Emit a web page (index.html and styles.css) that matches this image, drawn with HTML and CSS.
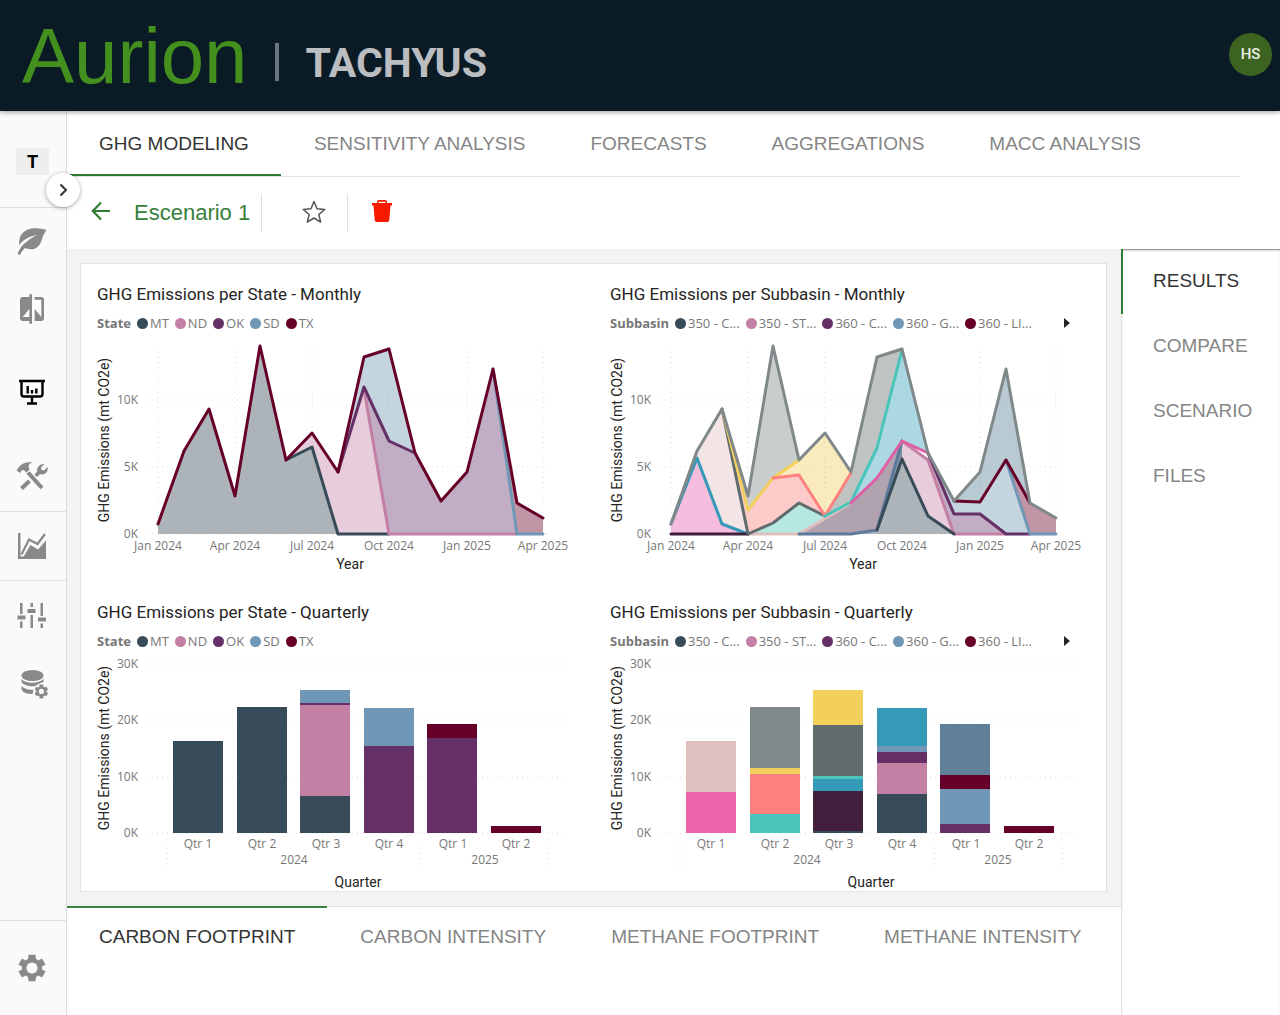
FILE: index.html
```html
<!DOCTYPE html>
<html lang="en">
<head>
<meta charset="utf-8">
<title>Aurion | Tachyus - GHG Modeling</title>
<link rel="stylesheet" href="styles.css">
</head>
<body>
<header class="topbar">
  <a class="brand" href="#">Aurion</a>
  <span class="brand-divider"></span>
  <span class="company">TACHYUS</span>
  <button class="avatar" type="button">HS</button>
</header>

<div class="shell">
  <aside class="sidebar">
    <div class="workspace">
      <button class="workspace-badge" type="button">T</button>
      <button class="expand" type="button" aria-label="Expand menu">
        <svg width="24" height="24" viewBox="0 0 24 24"><path d="M9.500 6.500 15 12l-5.500 5.500" fill="none" stroke="#333" stroke-width="2"/></svg>
      </button>
    </div>
    <nav class="side-group">
      <a class="side-link h67" href="#" aria-label="Emissions">
        <svg width="32" height="30" viewBox="0 0 32 30"><path d="M30.500 3C22 0 10 0 5 8c-2 4-2 7-2 10C8 12 14 9 21 8 13 12 4.500 18 1.500 27l2.500 1c1-3 3-5 5-7 7 3 13 1 16-6 1.500-5 3-9 5.500-12z"/></svg>
      </a>
      <a class="side-link h68" href="#" aria-label="Compare">
        <svg width="32" height="32" viewBox="0 0 24 24"><path d="M10 3H5c-1.100 0-2 .9-2 2v14c0 1.100.9 2 2 2h5v2h2V1h-2v2zm0 15H5l5-6v6zm9-15h-5v2h5v13l-5-6v9h5c1.100 0 2-.9 2-2V5c0-1.100-.9-2-2-2z"/></svg>
      </a>
      <a class="side-link h98 current" href="#" aria-label="Modeling">
        <svg width="28" height="26" viewBox="0 0 28 26"><path d="M1 2h26M3.500 2v13c0 1.500 1 2.500 2.500 2.500h16c1.500 0 2.500-1 2.500-2.500V2M14 18v6M9 24.500h10" fill="none" stroke="#000" stroke-width="2.400"/><path d="M9.700 7v7.500M14 11v3.500M18.300 9.500v5" fill="none" stroke="#000" stroke-width="2.400"/></svg>
      </a>
      <a class="side-link h70" href="#" aria-label="Tools">
        <svg width="32" height="30" viewBox="0 0 32 30"><path d="M.5 9.500 3 6C6 2 11 .5 17 1.500c-3 .5-4.500 2-4.500 4l1 3-3 3-3-2.500-2 .5L4.500 12z"/><path d="M12 11.500 26 27" stroke="#898989" stroke-width="4" fill="none"/><path d="M5.500 27.500l8-7.500" stroke="#898989" stroke-width="4" fill="none"/><path d="M28.500 3l-3.500 3.500.5 2.500 2.500.5 3.500-3.500c1 3.500-1 7-4.500 7.500l-3-.3-3 2.800-2.500-2.500 2.700-3C20.500 6.500 24 2.500 28.500 3z"/></svg>
      </a>
    </nav>
    <nav class="side-group">
      <a class="side-link h68" href="#" aria-label="Charts">
        <svg width="28" height="26" viewBox="0 0 28 26"><path d="M0 0h2.500v23.500H28V26H0z"/><path d="M3.500 21.500 11 6.500l8.500 4.500L27 1" fill="none" stroke="#898989" stroke-width="2.200"/><path d="M6 23 12.500 12l7.500 4.500 8-9V25H5z"/></svg>
      </a>
    </nav>
    <nav class="side-group">
      <a class="side-link h68" href="#" aria-label="Parameters">
        <svg width="30" height="26" viewBox="0 0 30 26"><path d="M4 1h2.500v11H4zM1.500 13.500h8v4h-8zM4 19.500h2.500V26H4zM14.500 1H17v4h-2.500zM11.500 7h8v4h-8zM14.500 13H17v13h-2.500zM24.500 1H27v13h-2.500zM22 15.500h8v4h-8zM24.500 21.500H27V26h-2.500z"/></svg>
      </a>
      <a class="side-link h70" href="#" aria-label="Data settings">
        <svg class="shift" width="30" height="30" viewBox="0 0 30 30"><ellipse cx="12.500" cy="6.500" rx="11" ry="5.500"/><path d="M1.500 10c4 5 17 5 22 0v3c-3 1-6 2-8 4-6 1-12-1-14-4zM1.500 17c3 3 8 4 12 4l-1 4c-5 0-10-1-11-5z"/><path transform="translate(13 14) scale(.7)" d="M19.500 12c0-.3 0-.7-.1-1l2.100-1.700-2.200-4-2.600 1c-.5-.4-1.100-.8-1.700-1L14.600 2H9.400L9 5.300c-.6.2-1.200.6-1.700 1l-2.600-1-2.200 4L4.600 11c-.1.300-.1.700-.1 1s0 .7.100 1l-2.100 1.700 2.200 4 2.600-1c.5.400 1.100.8 1.700 1l.4 3.300h5.200l.4-3.300c.6-.2 1.200-.6 1.700-1l2.600 1 2.200-4-2.100-1.700c.1-.3.100-.7.100-1zM12 15.700a3.700 3.700 0 1 1 0-7.400 3.700 3.700 0 0 1 0 7.400z"/></svg>
      </a>
    </nav>
    <nav class="side-group side-bottom">
      <a class="side-link h94" href="#" aria-label="Settings">
        <svg width="32" height="32" viewBox="0 0 24 24"><path d="M19.500 12c0-.3 0-.7-.1-1l2.700-1.700-2.600-4.500-2.900 1.500c-.5-.4-1.100-.8-1.700-1L14.600 2H9.400L9 5.300c-.6.2-1.200.6-1.700 1L4.500 4.800 1.900 9.300 4.600 11c-.1.300-.1.700-.1 1s0 .7.100 1l-2.700 1.700 2.600 4.500 2.800-1.500c.5.400 1.100.8 1.700 1l.4 3.300h5.200l.4-3.300c.6-.2 1.200-.6 1.700-1l2.800 1.500 2.600-4.500-2.700-1.700c.1-.3.100-.7.100-1zM12 16.200a4.200 4.200 0 1 1 0-8.400 4.200 4.200 0 0 1 0 8.400z"/></svg>
      </a>
    </nav>
  </aside>

  <div class="page">
    <nav class="tabs top-tabs">
      <a class="tab active" href="#">GHG MODELING</a>
      <a class="tab" href="#">SENSITIVITY ANALYSIS</a>
      <a class="tab" href="#">FORECASTS</a>
      <a class="tab" href="#">AGGREGATIONS</a>
      <a class="tab" href="#">MACC ANALYSIS</a>
    </nav>

    <div class="toolbar">
      <a class="back" href="#" aria-label="Back">
        <svg width="20" height="20" viewBox="0 0 20 20"><path d="M19 10H2M10 1.500 1.800 10l8.200 8.500" fill="none" stroke="#2e7d32" stroke-width="2.200"/></svg>
      </a>
      <h1 class="scenario">Escenario 1</h1>
      <div class="tool">
        <button class="icon-btn" type="button" aria-label="Favorite">
          <svg width="24" height="24" viewBox="0 0 24 24"><path d="M12 1.500l3 7.300 7.800.6-6 5.100 1.900 7.600-6.700-4.100-6.700 4.100 1.900-7.600-6-5.100 7.800-.6z" fill="none" stroke="#555" stroke-width="1.500" stroke-linejoin="round"/></svg>
        </button>
      </div>
      <button class="icon-btn trash" type="button" aria-label="Delete">
        <svg width="20" height="22" viewBox="0 0 20 22"><path d="M0 3h5V1.800C5 .8 5.800 0 6.800 0h6.400c1 0 1.800.8 1.800 1.800V3h5v2.500h-1.500L17.300 20c-.1 1-.9 2-2 2H4.700c-1.100 0-1.900-1-2-2L1.500 5.500H0zm6.500 0h7V1.700h-7z" fill="#f51a00"/></svg>
      </button>
    </div>

    <div class="work">
      <div class="center">
        <main class="board">
          <section class="chart">
            <h2 class="chart-title">GHG Emissions per State - Monthly</h2>
            <div class="legend"><b>State</b><span class="key mt">MT</span><span class="key nd">ND</span><span class="key ok">OK</span><span class="key sd">SD</span><span class="key tx">TX</span></div>
            <svg class="plot" viewBox="0 0 512 249">
              <path class="a-mt" d="M77 201V191L103 118 128 76 154 163 179 13 205 127 231 114 257 201z"/>
              <path class="a-nd" d="M205 127 231 100 257 139 283 56 308 201H257L231 114z"/>
              <path class="a-ok" d="M283 54 308 108 334 120 360 168 386 139 412 36 436 201H308z"/>
              <path class="a-sd" d="M257 139 283 24 308 16 334 120 308 108 283 54z"/>
              <path class="a-tx" d="M412 36 436 170 462 185V201H436z"/>
              <path class="grid" d="M66 201H470M66 134H470M66 67H470M77 14V201M154 14V201M231 14V201M308 14V201M386 14V201M462 14V201"/>
              <g class="line">
                <path class="s-mt" d="M205 127 231 114 257 201H308"/>
                <path class="s-nd" d="M283 56 308 201H436"/>
                <path class="s-ok" d="M257 139 283 54 308 108 334 120"/>
                <path class="s-sd" d="M412 36 436 201H462"/>
                <path class="s-tx" d="M77 191 103 118 128 76 154 163 179 13 205 127 231 100 257 139 283 24 308 16 334 120 360 168 386 139 412 36 436 170 462 185"/>
              </g>
              <g class="axis end"><text x="57" y="205">0K</text><text x="57" y="138">5K</text><text x="57" y="71">10K</text></g>
              <g class="axis mid"><text x="77" y="217">Jan 2024</text><text x="154" y="217">Apr 2024</text><text x="231" y="217">Jul 2024</text><text x="308" y="217">Oct 2024</text><text x="386" y="217">Jan 2025</text><text x="462" y="217">Apr 2025</text></g>
              <text class="axis-title" x="269" y="236">Year</text>
              <text class="axis-title" transform="translate(28 107) rotate(-90)">GHG Emissions (mt CO2e)</text>
            </svg>
          </section>

          <section class="chart">
            <h2 class="chart-title">GHG Emissions per Subbasin - Monthly</h2>
            <div class="legend"><b>Subbasin</b><span class="key mt">350 - C...</span><span class="key nd">350 - ST...</span><span class="key ok">360 - C...</span><span class="key sd">360 - G...</span><span class="key tx">360 - LI...</span><button class="next" type="button" aria-label="Next"></button></div>
            <svg class="plot" viewBox="0 0 512 249">
              <path fill="#f6bcdd" d="M77 201V191L103 125 128 191 154 201z"/>
              <path fill="#f3e4e5" d="M77 191 103 118 128 76 154 201 128 191 103 125z"/>
              <path fill="#c9cecd" d="M128 76 154 163 179 13 205 127 179 145 154 177z"/>
              <path fill="#fdcaca" d="M128 76 154 177 179 145 205 142 231 183 205 170 179 190 154 201z"/>
              <path fill="#faebbf" d="M179 145 205 127 231 100 257 139 231 183 205 142z"/>
              <path fill="#b5e8e1" d="M154 201 179 190 205 170 231 183 257 169 205 201z"/>
              <path fill="#bfc4c2" d="M231 183 257 139 283 24 308 16 283 115 257 169z"/>
              <path fill="#abd8e3" d="M257 169 283 115 308 16 334 120 308 108 283 145z"/>
              <path fill="#b1a2af" d="M205 201 257 170 283 145 308 108 283 197 257 201z"/>
              <path fill="#8593a8" d="M283 197 308 108V126z"/>
              <path class="a-mt" d="M257 201 283 197 308 126 334 183 360 201z"/>
              <path class="a-nd" d="M308 108 334 127 360 201 334 183 308 126z"/>
              <path class="a-ok" d="M334 120 360 181H386L412 201H360L334 127z"/>
              <path class="a-sd" d="M334 120 360 168 386 169 412 127 436 201H412L386 181H360z"/>
              <path fill="#bacad3" d="M360 168 386 139 412 36 436 170 412 127 386 169z"/>
              <path class="a-tx" d="M412 127 436 170 462 185V201H436z"/>
              <path class="grid" d="M66 201H470M66 134H470M66 67H470M77 14V201M154 14V201M231 14V201M308 14V201M386 14V201M462 14V201"/>
              <g class="line">
                <path stroke="#dfbfbf" d="M154 201H205L257 170"/>
                <path stroke="#3599b8" d="M77 191 103 125 128 191 154 201"/>
                <path stroke="#411f3d" d="M77 201H154"/>
                <path stroke="#5f6b6d" d="M128 76 154 201 179 190 205 170 231 183"/>
                <path stroke="#f2d05b" d="M128 76 154 177 179 145 205 127"/>
                <path stroke="#fd817e" d="M179 145 205 142 231 183 257 140"/>
                <path stroke="#4ac5bb" d="M231 183 257 169 283 115 308 17"/>
                <path class="s-nd" d="M308 108 334 127 360 201H412"/>
                <path stroke="#5c7a9b" d="M205 201H257L283 197 308 108"/>
                <path stroke="#e05fa4" d="M257 170 283 145 308 108 334 120"/>
                <path class="s-mt" d="M283 197 308 126 334 183 360 201"/>
                <path class="s-ok" d="M334 120 360 181H386L412 201H436"/>
                <path class="s-sd" d="M412 127 436 201H462"/>
                <path class="s-tx" d="M360 168 386 169 412 127 436 170"/>
                <path stroke="#7f898a" d="M77 191 103 118 128 76 154 163 179 13 205 127 231 100 257 139 283 24 308 16 334 120 360 168 386 139 412 36 436 170 462 185"/>
              </g>
              <g class="axis end"><text x="57" y="205">0K</text><text x="57" y="138">5K</text><text x="57" y="71">10K</text></g>
              <g class="axis mid"><text x="77" y="217">Jan 2024</text><text x="154" y="217">Apr 2024</text><text x="231" y="217">Jul 2024</text><text x="308" y="217">Oct 2024</text><text x="386" y="217">Jan 2025</text><text x="462" y="217">Apr 2025</text></g>
              <text class="axis-title" x="269" y="236">Year</text>
              <text class="axis-title" transform="translate(28 107) rotate(-90)">GHG Emissions (mt CO2e)</text>
            </svg>
          </section>

          <section class="chart">
            <h2 class="chart-title">GHG Emissions per State - Quarterly</h2>
            <div class="legend"><b>State</b><span class="key mt">MT</span><span class="key nd">ND</span><span class="key ok">OK</span><span class="key sd">SD</span><span class="key tx">TX</span></div>
            <svg class="plot" viewBox="0 0 512 240">
              <path class="grid" d="M66 182H484M66 126H484M66 69H484M66 13H484M86 182V219M340 182V219M468 182V219"/>
              <path fill="#374b59" d="M92 90h50v92H92zM156 56h50v126h-50zM219 145h50v37h-50z"/>
              <path fill="#c47fa5" d="M219 54h50v91h-50z"/>
              <path fill="#643066" d="M219 52h50v2h-50zM283 95h50v87h-50zM346 87h50v95h-50z"/>
              <path fill="#7097b5" d="M219 39h50v13h-50zM283 57h50v38h-50z"/>
              <path fill="#660029" d="M346 73h50v14h-50zM410 175h50v7h-50z"/>
              <g class="axis end"><text x="57" y="186">0K</text><text x="57" y="130">10K</text><text x="57" y="73">20K</text><text x="57" y="17">30K</text></g>
              <g class="axis mid"><text x="117" y="197">Qtr 1</text><text x="181" y="197">Qtr 2</text><text x="245" y="197">Qtr 3</text><text x="308" y="197">Qtr 4</text><text x="372" y="197">Qtr 1</text><text x="435" y="197">Qtr 2</text><text x="213" y="213">2024</text><text x="404" y="213">2025</text></g>
              <text class="axis-title" x="277" y="236">Quarter</text>
              <text class="axis-title" transform="translate(28 97) rotate(-90)">GHG Emissions (mt CO2e)</text>
            </svg>
          </section>

          <section class="chart">
            <h2 class="chart-title">GHG Emissions per Subbasin - Quarterly</h2>
            <div class="legend"><b>Subbasin</b><span class="key mt">350 - C...</span><span class="key nd">350 - ST...</span><span class="key ok">360 - C...</span><span class="key sd">360 - G...</span><span class="key tx">360 - LI...</span><button class="next" type="button" aria-label="Next"></button></div>
            <svg class="plot" viewBox="0 0 512 240">
              <path class="grid" d="M66 182H484M66 126H484M66 69H484M66 13H484M86 182V219M340 182V219M468 182V219"/>
              <path fill="#ec64a9" d="M92 141h50v41H92z"/>
              <path fill="#dfbfbf" d="M92 90h50v51H92z"/>
              <path fill="#4ac5bb" d="M156 163h50v19h-50zM219 125h50v3h-50z"/>
              <path fill="#fd817e" d="M156 123h50v40h-50z"/>
              <path fill="#f2d05b" d="M156 117h50v6h-50zM219 39h50v35h-50z"/>
              <path fill="#7f898a" d="M156 56h50v61h-50z"/>
              <path fill="#374b59" d="M219 180h50v2h-50zM283 143h50v39h-50z"/>
              <path fill="#411f3d" d="M219 140h50v40h-50z"/>
              <path fill="#3599b8" d="M219 128h50v12h-50zM283 57h50v38h-50z"/>
              <path fill="#5f6b6d" d="M219 74h50v51h-50z"/>
              <path fill="#c47fa5" d="M283 112h50v31h-50z"/>
              <path fill="#643066" d="M283 101h50v11h-50zM346 173h50v9h-50z"/>
              <path fill="#7097b5" d="M283 95h50v6h-50zM346 138h50v35h-50z"/>
              <path fill="#660029" d="M346 124h50v14h-50zM410 175h50v7h-50z"/>
              <path fill="#5f8098" d="M346 73h50v51h-50z"/>
              <g class="axis end"><text x="57" y="186">0K</text><text x="57" y="130">10K</text><text x="57" y="73">20K</text><text x="57" y="17">30K</text></g>
              <g class="axis mid"><text x="117" y="197">Qtr 1</text><text x="181" y="197">Qtr 2</text><text x="245" y="197">Qtr 3</text><text x="308" y="197">Qtr 4</text><text x="372" y="197">Qtr 1</text><text x="435" y="197">Qtr 2</text><text x="213" y="213">2024</text><text x="404" y="213">2025</text></g>
              <text class="axis-title" x="277" y="236">Quarter</text>
              <text class="axis-title" transform="translate(28 97) rotate(-90)">GHG Emissions (mt CO2e)</text>
            </svg>
          </section>
        </main>

        <nav class="tabs bottom-tabs">
          <a class="tab active" href="#">CARBON FOOTPRINT</a>
          <a class="tab" href="#">CARBON INTENSITY</a>
          <a class="tab" href="#">METHANE FOOTPRINT</a>
          <a class="tab" href="#">METHANE INTENSITY</a>
        </nav>
      </div>

      <nav class="views">
        <a class="view active" href="#">RESULTS</a>
        <a class="view" href="#">COMPARE</a>
        <a class="view" href="#">SCENARIO</a>
        <a class="view" href="#">FILES</a>
      </nav>
    </div>
  </div>
</div>
</body>
</html>
```
FILE: styles.css
```css
* { box-sizing: border-box; }

body {
  margin: 0;
  min-height: 100vh;
  display: flex;
  flex-direction: column;
  background: #fff;
  font-family: "Liberation Sans", Arial, sans-serif;
  color: #333;
}

a { color: inherit; text-decoration: none; }
button { border: 0; padding: 0; background: none; font: inherit; color: inherit; cursor: pointer; }
svg { display: block; }

/* Top bar */
.topbar {
  display: flex;
  align-items: center;
  height: 111px;
  padding: 0 8px 0 22px;
  background: #0b1b26;
  box-shadow: 0 1px 5px rgba(0, 0, 0, .4);
  position: relative;
  z-index: 2;
}
.brand { font-size: 78px; line-height: 88px; color: #43901f; }
.brand-divider { width: 4px; height: 38px; margin: 12px 26px 0 28px; background: #6d767c; }
.company { font: bold 41px/48px Roboto, sans-serif; color: #bcbdc0; padding-top: 14px; }
.avatar {
  width: 43px;
  height: 43px;
  margin: 0 0 3px auto;
  border-radius: 50%;
  background: #3d6321;
  color: #e8eee4;
  font: 500 15px/43px Roboto, sans-serif;
}

.shell { flex: 1; display: flex; }

/* Sidebar */
.sidebar {
  flex: none;
  width: 67px;
  display: flex;
  flex-direction: column;
  background: #fafafa;
  border-right: 1px solid #dcdcdc;
}
.workspace { position: relative; height: 96px; padding: 37px 0 0 16px; }
.workspace-badge { width: 33px; height: 27px; background: #eee; color: #000; font: bold 18px/27px Roboto, sans-serif; }
.expand {
  position: absolute;
  top: 62px;
  left: 46px;
  z-index: 1;
  width: 34px;
  height: 34px;
  border-radius: 50%;
  background: #fff;
  box-shadow: 0 1px 4px rgba(0, 0, 0, .35);
  display: grid;
  place-items: center;
}
.side-group { border-top: 1px solid #e0e0e0; }
.side-bottom { margin-top: auto; }
.side-link { display: flex; align-items: center; padding-left: 16px; fill: #898989; }
.side-link svg { margin: 0 auto 0 0; }
.side-link svg[width="28"] { margin-left: 2px; }
.side-link .shift { margin-left: 4px; }
.current { fill: #000; }
.h67 { height: 67px; }
.h68 { height: 68px; }
.h70 { height: 70px; }
.h94 { height: 94px; }
.h98 { height: 98px; }

/* Tabs */
.page { flex: 1; min-width: 0; display: flex; flex-direction: column; }
.tabs { display: flex; gap: 1px; font-size: 19px; color: #858585; }
.tab { padding: 0 32px; line-height: 65px; white-space: nowrap; }
.tab.active, .view.active { color: #333; }
.top-tabs { height: 66px; margin-right: 40px; border-bottom: 1px solid #e2e2e2; }
.top-tabs .active { height: 65px; border-bottom: 2px solid #2e7d32; }
.bottom-tabs { flex: 1; min-height: 109px; background: #fff; border-top: 1px solid #e2e2e2; }
.bottom-tabs .tab { margin-top: -1px; line-height: 58px; border-top: 2px solid transparent; }
.bottom-tabs .active { border-color: #3c8540; }

/* Toolbar */
.toolbar { display: flex; align-items: center; height: 72px; padding-left: 24px; }
.back { margin-bottom: 4px; }
.scenario { margin: 0; padding: 0 11px 0 23px; font-size: 22px; font-weight: 400; line-height: 26px; color: #37803b; }
.tool { height: 38px; padding: 0 21px 0 40px; border: solid #e0e0e0; border-width: 0 1px; display: flex; align-items: center; }
.tool .icon-btn { margin-bottom: 2px; }
.trash { margin: 0 0 4px 24px; }

/* Work area */
.work { flex: 1; display: flex; }
.center { flex: 1; min-width: 0; display: flex; flex-direction: column; background: #f3f3f3; }
.board {
  margin: 14px 14px 14px 13px;
  border: 1px solid #e2e2e2;
  background: #fff;
  display: grid;
  grid-template-columns: 1fr 1fr;
  column-gap: 1px;
}

.views {
  flex: none;
  width: 159px;
  border-left: 1px solid #e0e0e0;
  box-shadow: inset 0 2px 2px -1px #777;
  font-size: 19px;
  color: #858585;
}
.view { display: block; height: 65px; margin-left: -1px; padding-left: 30px; border-left: 2px solid transparent; line-height: 63px; }
.view.active { border-color: #2e7d32; }

/* Charts */
.chart { padding-top: 18px; min-width: 0; }
.chart-title { margin: 0 0 7px 16px; font: 400 17px/24px Roboto, sans-serif; color: #252423; }
.legend { display: flex; align-items: center; gap: 6px; padding: 0 36px 0 16px; font: 13px/20px "Open Sans", sans-serif; color: #777; }
.key { display: flex; align-items: center; gap: 2px; white-space: nowrap; }
.key::before { content: ""; width: 11px; height: 11px; border-radius: 50%; background: currentColor; }
.key.mt::before { background: #374b59; }
.key.nd::before { background: #c47fa5; }
.key.ok::before { background: #643066; }
.key.sd::before { background: #7097b5; }
.key.tx::before { background: #660029; }
.next { margin-left: auto; border: solid transparent; border-width: 5px 0 5px 6px; border-left-color: #252423; }
.plot { width: 100%; height: auto; }

.grid { fill: none; stroke: rgba(110, 110, 110, .22); stroke-dasharray: 1 4; }
.axis { font: 12px "Open Sans", sans-serif; fill: #777; }
.end { text-anchor: end; }
.mid { text-anchor: middle; }
.axis-title { font: 14px Roboto, sans-serif; fill: #252423; text-anchor: middle; }
.line { fill: none; stroke-width: 3; stroke-linejoin: round; stroke-linecap: round; }
.a-mt { fill: #adb4b9; }
.a-nd { fill: #e7ccdb; }
.a-ok { fill: #c1aec4; }
.a-sd { fill: #c4d5e0; }
.a-tx { fill: #c195a6; }
.s-mt { stroke: #374b59; }
.s-nd { stroke: #c47fa5; }
.s-ok { stroke: #643066; }
.s-sd { stroke: #7097b5; }
.s-tx { stroke: #660029; }
```
